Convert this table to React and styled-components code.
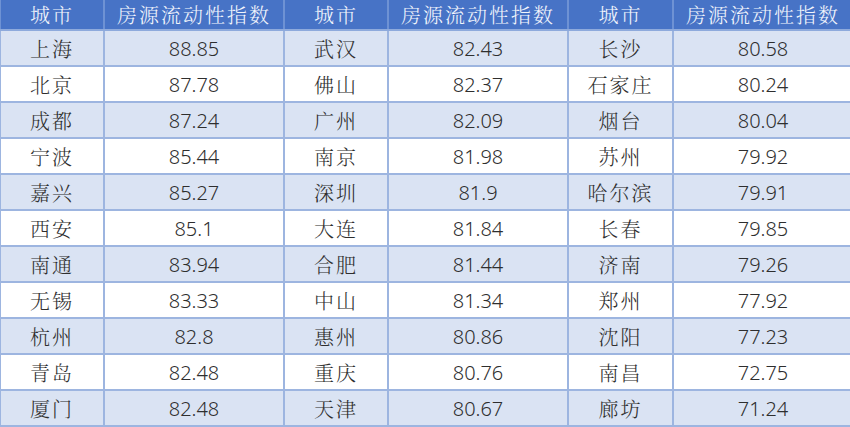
import React from 'react'
import styled, { createGlobalStyle } from 'styled-components'

const GlobalStyle = createGlobalStyle`
  html, body {
    margin: 0;
    padding: 0;
    background: #ffffff;
    overflow: hidden;
  }
`

const Wrapper = styled.section`
  width: 850px;
  height: 427px;
  overflow: hidden;
`

const Table = styled.table`
  border-collapse: collapse;
  table-layout: fixed;
  width: 853px;
  margin-left: -1px;
  margin-top: -1px;
`

const HeadCell = styled.th`
  height: 30px;
  padding: 0;
  background: #4773c6;
  color: #f2f5fc;
  font-family: 'Noto Serif CJK SC', 'Noto Sans CJK SC', serif;
  font-weight: 300;
  font-size: 20px;
  letter-spacing: 2px;
  text-align: center;
  border: 2px solid #6e92d4;
  border-top: none;
  border-bottom-color: #8eaadc;
`

const Row = styled.tr`
  background: ${(p) => (p.$shaded ? '#dae3f3' : '#ffffff')};
`

const Cell = styled.td`
  height: 34px;
  padding: 0;
  text-align: center;
  border: 2px solid #9db5e0;
  color: #2e2e2e;
  font-size: 20px;
  font-family: ${(p) =>
    p.$city
      ? "'Noto Serif CJK SC', 'Noto Sans CJK SC', serif"
      : "'Noto Sans', 'Open Sans', sans-serif"};
  font-weight: 300;
  letter-spacing: ${(p) => (p.$city ? '2px' : '0')};
`

const data = [
  ['上海', '88.85', '武汉', '82.43', '长沙', '80.58'],
  ['北京', '87.78', '佛山', '82.37', '石家庄', '80.24'],
  ['成都', '87.24', '广州', '82.09', '烟台', '80.04'],
  ['宁波', '85.44', '南京', '81.98', '苏州', '79.92'],
  ['嘉兴', '85.27', '深圳', '81.9', '哈尔滨', '79.91'],
  ['西安', '85.1', '大连', '81.84', '长春', '79.85'],
  ['南通', '83.94', '合肥', '81.44', '济南', '79.26'],
  ['无锡', '83.33', '中山', '81.34', '郑州', '77.92'],
  ['杭州', '82.8', '惠州', '80.86', '沈阳', '77.23'],
  ['青岛', '82.48', '重庆', '80.76', '南昌', '72.75'],
  ['厦门', '82.48', '天津', '80.67', '廊坊', '71.24']
]

const widths = [104, 180, 104, 180, 105, 180]

export default function App() {
  return (
    <Wrapper>
      <GlobalStyle />
      <Table>
        <colgroup>
          {widths.map((w, i) => (
            <col key={i} style={{ width: w }} />
          ))}
        </colgroup>
        <thead>
          <tr>
            {[0, 1, 2].map((i) => (
              <React.Fragment key={i}>
                <HeadCell>城市</HeadCell>
                <HeadCell>房源流动性指数</HeadCell>
              </React.Fragment>
            ))}
          </tr>
        </thead>
        <tbody>
          {data.map((row, r) => (
            <Row key={r} $shaded={r % 2 === 0}>
              {row.map((value, c) => (
                <Cell key={c} $city={c % 2 === 0}>
                  {value}
                </Cell>
              ))}
            </Row>
          ))}
        </tbody>
      </Table>
    </Wrapper>
  )
}
